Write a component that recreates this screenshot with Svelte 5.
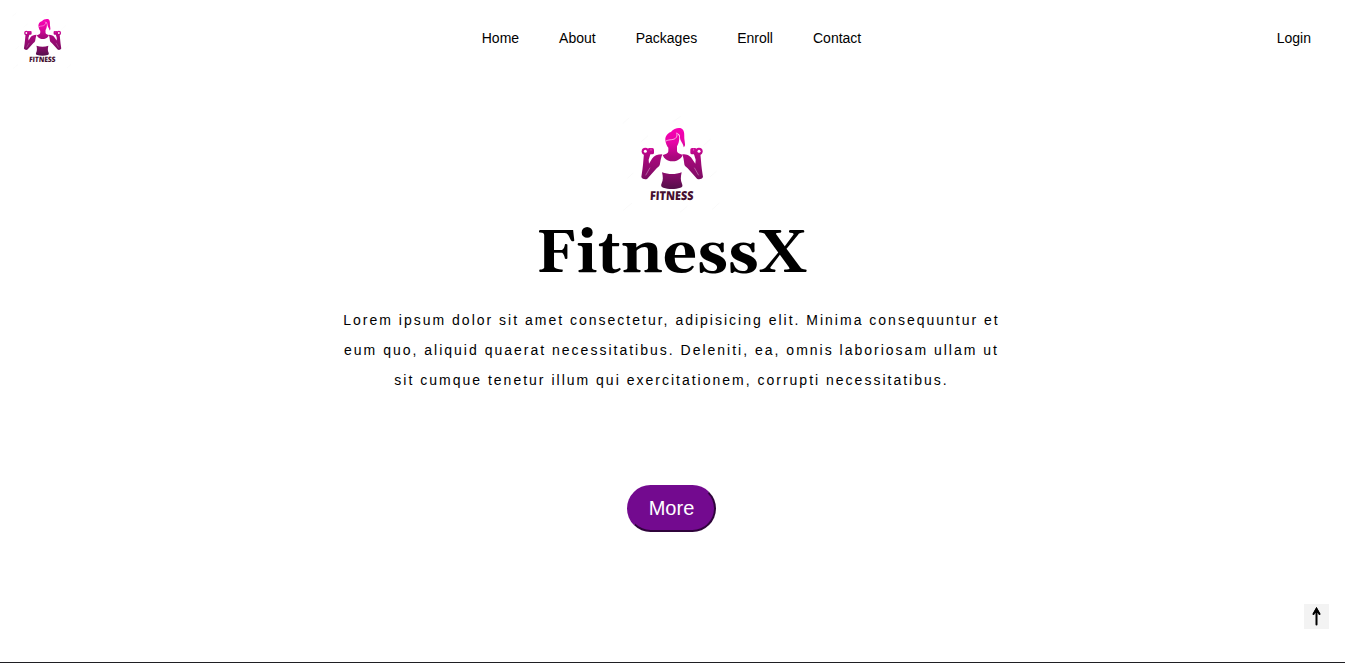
<script>
  const links = ['Home', 'About', 'Packages', 'Enroll', 'Contact'];
</script>

{#snippet logo(id)}
  <svg class="logo" viewBox="0 0 312 300" role="img" aria-label="Fitness">
    <defs>
      <linearGradient id={id} gradientUnits="userSpaceOnUse" x1="0" y1="39" x2="0" y2="256">
        <stop offset="0" stop-color="#f800b4" />
        <stop offset="0.2" stop-color="#e604a6" />
        <stop offset="0.4" stop-color="#a9087d" />
        <stop offset="0.65" stop-color="#850c68" />
        <stop offset="0.84" stop-color="#54104a" />
        <stop offset="1" stop-color="#38102f" />
      </linearGradient>
    </defs>
    <g stroke="#f5f5f5" stroke-width="1.5">
      <path d="M8 26l20-18M62 82l22-20M160 20l22-16M250 92l22-20M22 190l18-16M270 186l20-18M10 286l26-22M180 292l22-18M276 284l22-20" />
    </g>
    <g fill="url(#{id})">
      <path d="M153 51C160 41 175 37 183 40C197 46 191 64 194 78C195 88 197 92 191 97C191 86 181 80 180 68C180 60 177 56 171 55Z" />
      <path d="M157 50C168 49 177 57 178 67C178 79 175 88 171 94L171 108C172 115 181 117 188 119C185 131 174 135 164 139L151 139C141 136 132 131 128 120C138 117 145 115 145 107L145 98C140 93 137 84 136 75C135 62 145 51 157 50Z" />
      <path d="M127 118C112 118 102 122 96 131L87 146L86 134L92 115L84 110L72 115L70 137C69 154 66 171 64 186C67 193 77 194 82 191L110 160L117 154C122 149 119 139 127 118Z" />
      <path d="M187 118C202 118 210 122 216 131L226 146L227 134L221 115L229 110L241 115L243 137C244 154 247 171 249 186C246 193 236 194 231 191L203 160L196 154C191 149 194 139 187 118Z" />
      <path d="M126 172C145 179 168 179 185 172C182 186 181 196 186 206C189 212 187 217 181 218C166 223 145 223 130 218C123 216 122 211 125 205C130 196 129 184 126 172Z" />
      <rect x="83" y="99" width="19" height="19" rx="5" />
      <rect x="211" y="99" width="19" height="19" rx="5" />
      <circle cx="76" cy="109" r="11" />
      <circle cx="237" cy="109" r="11" />
    </g>
    <text class="word" transform="translate(89 255) skewX(-3)" textLength="131" lengthAdjust="spacingAndGlyphs">FITNESS</text>
    <g fill="none" stroke="#fff" stroke-width="2">
      <path d="M138 78C148 72 162 77 169 67C172 62 171 58 170 53" />
      <path d="M93 101v6M221 101v6M77 181L90 158M236 181L223 158" stroke-width="1" />
    </g>
    <circle cx="76" cy="109" r="4.5" fill="#fff" />
    <circle cx="237" cy="109" r="4.5" fill="#fff" />
  </svg>
{/snippet}

<div class="page">
  <header>
    <div class="brand">{@render logo('brandFill')}</div>
    <nav>
      {#each links as link}
        <a href="#{link.toLowerCase()}">{link}</a>
      {/each}
    </nav>
    <a class="login" href="#login">Login</a>
  </header>
  <main>
    <div class="hero">{@render logo('heroFill')}</div>
    <h1>FitnessX</h1>
    <p>
      Lorem ipsum dolor sit amet consectetur, adipisicing elit. Minima consequuntur et eum quo,
      aliquid quaerat necessitatibus. Deleniti, ea, omnis laboriosam ullam ut sit cumque tenetur
      illum qui exercitationem, corrupti necessitatibus.
    </p>
    <button class="more">More</button>
  </main>
  <a class="top" href="#home" aria-label="Back to top">
    <svg viewBox="0 0 25 25">
      <path d="M12.5 20.5V6M9.5 10L12.5 5L15.5 10" fill="none" stroke="#000" stroke-width="2" stroke-linecap="round" />
      <path d="M12.5 3L8.5 10.5L12.5 8L16.5 10.5Z" />
    </svg>
  </a>
</div>

<style>
  :global(body) {
    margin: 0;
    overflow: hidden;
  }
  .page {
    box-sizing: border-box;
    height: 663px;
    border-bottom: 1px solid #1f1f23;
    background: #fff;
    color: #000;
    font: 14px/16px "Liberation Sans", Arial, sans-serif;
  }
  header {
    display: grid;
    grid-template-columns: 1fr auto 1fr;
    align-items: center;
    height: 76px;
    padding: 0 34px 0 11px;
    box-sizing: border-box;
  }
  .brand {
    width: 63px;
    padding-top: 6px;
  }
  .logo {
    display: block;
    width: 100%;
  }
  .word {
    fill: #46102f;
    font: 800 37px "Open Sans", sans-serif;
  }
  nav {
    display: flex;
    gap: 40px;
    margin-left: 21px;
  }
  a {
    color: inherit;
    text-decoration: none;
  }
  .login {
    justify-self: end;
  }
  main {
    display: flex;
    flex-direction: column;
    align-items: center;
    padding: 39px 2px 0 0;
  }
  .hero {
    width: 104px;
    height: 100px;
  }
  h1 {
    margin: 0;
    padding-top: 6px;
    font: bold 60px/68px Georgia, Gelasio, "Liberation Serif", serif;
  }
  p {
    width: 672px;
    margin: 16px 0 90px;
    line-height: 30px;
    letter-spacing: 2px;
    text-align: center;
  }
  .more {
    padding: 10px 20px;
    border: 2px outset #730a8f;
    border-radius: 30px;
    background: #730a8f;
    color: #fff;
    font: 20px/23px "Liberation Sans", Arial, sans-serif;
  }
  .top {
    position: fixed;
    right: 16px;
    bottom: 34px;
    width: 25px;
    height: 25px;
    background: #f3f3f3;
  }
  .top svg {
    display: block;
  }
</style>
